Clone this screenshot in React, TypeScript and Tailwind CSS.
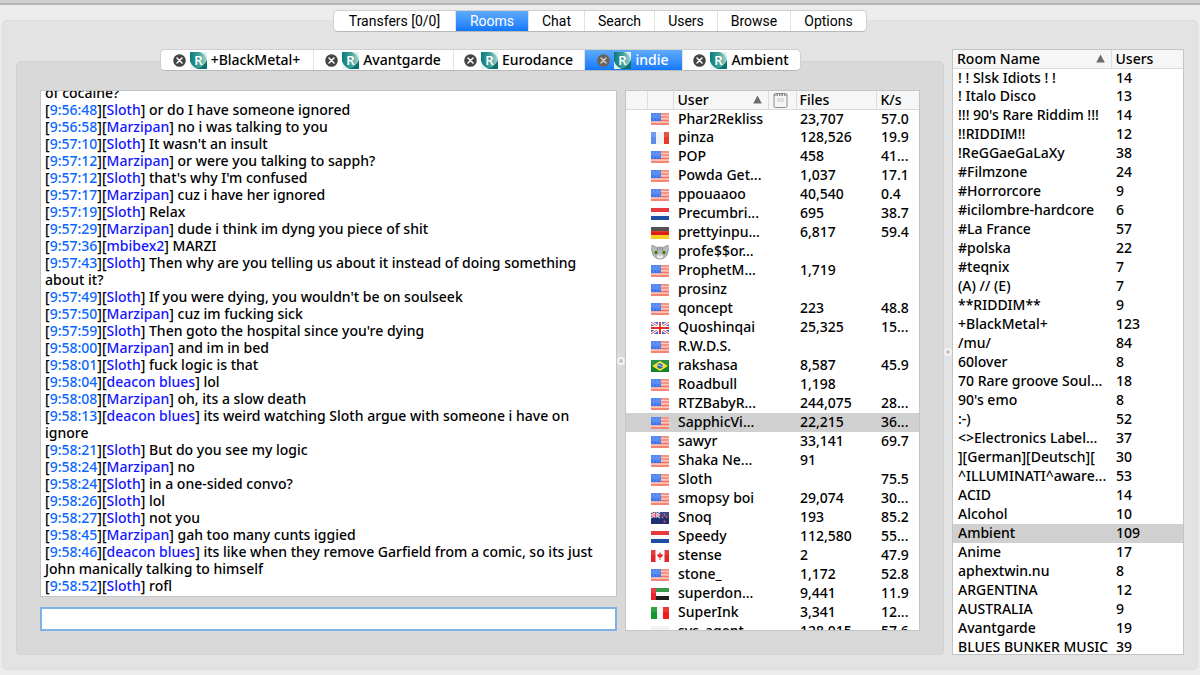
import { useState } from "react";
import clsx from "clsx";

interface IMessage {
  time: string;
  user: string;
  text: string;
}

interface IUser {
  flag: string;
  name: string;
  files: string;
  speed: string;
}

const mainTabs = [
  { label: "Transfers [0/0]", width: "w-[122px]" },
  { label: "Rooms", width: "w-[73px]" },
  { label: "Chat", width: "w-[56px]" },
  { label: "Search", width: "w-[70px]" },
  { label: "Users", width: "w-[63px]" },
  { label: "Browse", width: "w-[73px]" },
  { label: "Options", width: "w-[75px]" },
];

const roomTabs = [
  { label: "+BlackMetal+", width: "w-[153px]" },
  { label: "Avantgarde", width: "w-[140px]" },
  { label: "Eurodance", width: "w-[131px]" },
  { label: "indie", width: "w-[98px]" },
  { label: "Ambient", width: "w-[117px]" },
];

const messages: IMessage[] = [
  { time: "9:56:48", user: "Sloth", text: "or do I have someone ignored" },
  { time: "9:56:58", user: "Marzipan", text: "no i was talking to you" },
  { time: "9:57:10", user: "Sloth", text: "It wasn't an insult" },
  { time: "9:57:12", user: "Marzipan", text: "or were you talking to sapph?" },
  { time: "9:57:12", user: "Sloth", text: "that's why I'm confused" },
  { time: "9:57:17", user: "Marzipan", text: "cuz i have her ignored" },
  { time: "9:57:19", user: "Sloth", text: "Relax" },
  { time: "9:57:29", user: "Marzipan", text: "dude i think im dyng you piece of shit" },
  { time: "9:57:36", user: "mbibex2", text: "MARZI" },
  {
    time: "9:57:43",
    user: "Sloth",
    text: "Then why are you telling us about it instead of doing something about it?",
  },
  { time: "9:57:49", user: "Sloth", text: "If you were dying, you wouldn't be on soulseek" },
  { time: "9:57:50", user: "Marzipan", text: "cuz im fucking sick" },
  { time: "9:57:59", user: "Sloth", text: "Then goto the hospital since you're dying" },
  { time: "9:58:00", user: "Marzipan", text: "and im in bed" },
  { time: "9:58:01", user: "Sloth", text: "fuck logic is that" },
  { time: "9:58:04", user: "deacon blues", text: "lol" },
  { time: "9:58:08", user: "Marzipan", text: "oh, its a slow death" },
  {
    time: "9:58:13",
    user: "deacon blues",
    text: "its weird watching Sloth argue with someone i have on ignore",
  },
  { time: "9:58:21", user: "Sloth", text: "But do you see my logic" },
  { time: "9:58:24", user: "Marzipan", text: "no" },
  { time: "9:58:24", user: "Sloth", text: "in a one-sided convo?" },
  { time: "9:58:26", user: "Sloth", text: "lol" },
  { time: "9:58:27", user: "Sloth", text: "not you" },
  { time: "9:58:45", user: "Marzipan", text: "gah too many cunts iggied" },
  {
    time: "9:58:46",
    user: "deacon blues",
    text: "its like when they remove Garfield from a comic, so its just John manically talking to himself",
  },
  { time: "9:58:52", user: "Sloth", text: "rofl" },
];

const users: IUser[] = [
  { flag: "us", name: "Phar2Rekliss", files: "23,707", speed: "57.0" },
  { flag: "fr", name: "pinza", files: "128,526", speed: "19.9" },
  { flag: "us", name: "POP", files: "458", speed: "41..." },
  { flag: "us", name: "Powda Get...", files: "1,037", speed: "17.1" },
  { flag: "us", name: "ppouaaoo", files: "40,540", speed: "0.4" },
  { flag: "nl", name: "Precumbri...", files: "695", speed: "38.7" },
  { flag: "de", name: "prettyinpu...", files: "6,817", speed: "59.4" },
  { flag: "cat", name: "profe$$or...", files: "", speed: "" },
  { flag: "us", name: "ProphetM...", files: "1,719", speed: "" },
  { flag: "us", name: "prosinz", files: "", speed: "" },
  { flag: "us", name: "qoncept", files: "223", speed: "48.8" },
  { flag: "gb", name: "Quoshinqai", files: "25,325", speed: "15..." },
  { flag: "us", name: "R.W.D.S.", files: "", speed: "" },
  { flag: "br", name: "rakshasa", files: "8,587", speed: "45.9" },
  { flag: "us", name: "Roadbull", files: "1,198", speed: "" },
  { flag: "us", name: "RTZBabyR...", files: "244,075", speed: "28..." },
  { flag: "us", name: "SapphicVi...", files: "22,215", speed: "36..." },
  { flag: "us", name: "sawyr", files: "33,141", speed: "69.7" },
  { flag: "us", name: "Shaka Ne...", files: "91", speed: "" },
  { flag: "us", name: "Sloth", files: "", speed: "75.5" },
  { flag: "us", name: "smopsy boi", files: "29,074", speed: "30..." },
  { flag: "nz", name: "Snoq", files: "193", speed: "85.2" },
  { flag: "nl", name: "Speedy", files: "112,580", speed: "55..." },
  { flag: "ca", name: "stense", files: "2", speed: "47.9" },
  { flag: "us", name: "stone_", files: "1,172", speed: "52.8" },
  { flag: "ae", name: "superdon...", files: "9,441", speed: "11.9" },
  { flag: "it", name: "SuperInk", files: "3,341", speed: "12..." },
  { flag: "none", name: "sys_agent", files: "128,015", speed: "57.6" },
];

const rooms = [
  { name: "! ! Slsk Idiots ! !", users: 14 },
  { name: "! Italo Disco", users: 13 },
  { name: "!!! 90's Rare Riddim !!!", users: 14 },
  { name: "!!RIDDIM!!", users: 12 },
  { name: "!ReGGaeGaLaXy", users: 38 },
  { name: "#Filmzone", users: 24 },
  { name: "#Horrorcore", users: 9 },
  { name: "#icilombre-hardcore", users: 6 },
  { name: "#La France", users: 57 },
  { name: "#polska", users: 22 },
  { name: "#teqnix", users: 7 },
  { name: "(A) // (E)", users: 7 },
  { name: "**RIDDIM**", users: 9 },
  { name: "+BlackMetal+", users: 123 },
  { name: "/mu/", users: 84 },
  { name: "60lover", users: 8 },
  { name: "70 Rare groove Soul...", users: 18 },
  { name: "90's emo", users: 8 },
  { name: ":-)", users: 52 },
  { name: "<>Electronics Label...", users: 37 },
  { name: "][German][Deutsch][", users: 30 },
  { name: "^ILLUMINATI^aware...", users: 53 },
  { name: "ACID", users: 14 },
  { name: "Alcohol", users: 10 },
  { name: "Ambient", users: 109 },
  { name: "Anime", users: 17 },
  { name: "aphextwin.nu", users: 8 },
  { name: "ARGENTINA", users: 12 },
  { name: "AUSTRALIA", users: 9 },
  { name: "Avantgarde", users: 19 },
  { name: "BLUES BUNKER MUSIC", users: 39 },
];

function FlagShape({ code }: { code: string }) {
  switch (code) {
    case "us":
      return (
        <>
          <rect width="18" height="12" fill="#fbc3ba" />
          <path d="M0 1h18M0 4h18M0 7.500h18M0 11h18" stroke="#f4705f" strokeWidth="1.700" />
          <rect width="10" height="8" fill="#3d78ee" />
          <path d="M2 2h1M5 2h1M8 2h1M3.500 4h1M6.500 4h1M2 6h1M5 6h1M8 6h1" stroke="#7ba6f8" />
        </>
      );
    case "fr":
      return (
        <>
          <rect width="18" height="12" fill="#f1f1f1" />
          <rect width="5" height="12" fill="#5b8def" />
          <rect x="13" width="5" height="12" fill="#e8392e" />
        </>
      );
    case "it":
      return (
        <>
          <rect width="18" height="12" fill="#f4f4f4" />
          <rect width="6" height="12" fill="#16962c" />
          <rect x="12" width="6" height="12" fill="#ee1c1c" />
        </>
      );
    case "nl":
      return (
        <>
          <rect width="18" height="12" fill="#f7f7f7" />
          <rect width="18" height="4" fill="#e3201f" />
          <rect y="8" width="18" height="4" fill="#1c4fa3" />
        </>
      );
    case "de":
      return (
        <>
          <rect width="18" height="4" fill="#3d3a36" />
          <rect y="4" width="18" height="4" fill="#e01f14" />
          <rect y="8" width="18" height="4" fill="#f4cf25" />
        </>
      );
    case "gb":
      return (
        <>
          <rect width="18" height="12" fill="#3a62c8" />
          <path d="M0 0L18 12M18 0L0 12" stroke="#fff" strokeWidth="3" />
          <path d="M0 0L18 12M18 0L0 12" stroke="#ea4a4a" strokeWidth="1" />
          <path d="M9 0V12M0 6H18" stroke="#fff" strokeWidth="4" />
          <path d="M9 0V12M0 6H18" stroke="#e52a2a" strokeWidth="2" />
        </>
      );
    case "br":
      return (
        <>
          <rect width="18" height="12" fill="#12812b" />
          <path d="M9 1L17 6L9 11L1 6Z" fill="#f5e22e" />
          <circle cx="9" cy="6" r="2.700" fill="#2f64b8" />
          <path d="M6.700 5.500Q9 5 11.300 6.800" stroke="#dfeaff" strokeWidth="0.700" fill="none" />
        </>
      );
    case "nz":
      return (
        <>
          <rect width="18" height="12" fill="#1d3072" />
          <path d="M0 0L9 6M9 0L0 6" stroke="#c9cfe6" strokeWidth="1.300" />
          <path d="M4.500 0V6M0 3H9" stroke="#fff" strokeWidth="2" />
          <path d="M4.500 0V6M0 3H9" stroke="#e0364a" strokeWidth="1" />
          <g fill="#e8505c">
            <circle cx="13.500" cy="2.500" r="1" />
            <circle cx="11.500" cy="5.500" r="1" />
            <circle cx="15.500" cy="5" r="1" />
            <circle cx="13.500" cy="9.500" r="1.100" />
          </g>
        </>
      );
    case "ca":
      return (
        <>
          <rect width="18" height="12" fill="#fafafa" />
          <rect width="4.500" height="12" fill="#e2262b" />
          <rect x="13.500" width="4.500" height="12" fill="#e2262b" />
          <path d="M9 2L10 4L12 4.500L11 7L9.400 7.500V10H8.600V7.500L7 7L6 4.500L8 4Z" fill="#e2262b" />
        </>
      );
    case "ae":
      return (
        <>
          <rect width="18" height="12" fill="#f7f7f7" />
          <rect width="18" height="4" fill="#1c8a2e" />
          <rect y="8" width="18" height="4" fill="#1c1c1c" />
          <rect width="5" height="12" fill="#e8242a" />
        </>
      );
    default:
      return <rect width="18" height="12" fill="#f2f2f5" />;
  }
}

function Flag({ code }: { code: string }) {
  if (code === "cat") {
    return (
      <svg viewBox="0 0 18 16" className="h-4 w-[18px]">
        <path
          d="M1 1L6 3.500Q9 2.500 12 3.500L17 1Q18 6 16.500 10Q14 15 9 15Q4 15 1.500 10Q0 6 1 1Z"
          fill="#b4babe"
          stroke="#899095"
          strokeWidth="0.800"
        />
        <path d="M6.500 4V6.500M9 3.500V6.500M11.500 4V6.500" stroke="#70777c" strokeWidth="0.800" />
        <ellipse cx="5" cy="8.500" rx="2.200" ry="1.900" fill="#7fa63c" />
        <ellipse cx="13" cy="8.500" rx="2.200" ry="1.900" fill="#7fa63c" />
        <circle cx="5" cy="8.500" r="0.900" fill="#26331a" />
        <circle cx="13" cy="8.500" r="0.900" fill="#26331a" />
        <ellipse cx="9" cy="12.500" rx="3" ry="1.900" fill="#eef0f1" />
        <path d="M8 11H10L9 12.300Z" fill="#d98a90" />
      </svg>
    );
  }
  return (
    <svg viewBox="0 0 18 12" className="h-3 w-[18px]">
      <FlagShape code={code} />
      <rect width="18" height="5" fill="#fff" opacity="0.120" />
    </svg>
  );
}

function RoomLogo() {
  return (
    <svg viewBox="0 0 17 17" className="h-[17px] w-[17px]">
      <defs>
        <linearGradient id="roomLogo" x1="0" y1="0" x2="1" y2="0">
          <stop offset="0" stopColor="#0c7b78" />
          <stop offset="0.500" stopColor="#3a9d97" />
          <stop offset="1" stopColor="#a9d9d4" />
        </linearGradient>
      </defs>
      <rect width="17" height="17" fill="#e3f3f0" />
      <path d="M0 0H17V17H8Q2 15 0 9Z" fill="url(#roomLogo)" />
      <path d="M17 8V17H6Q14 15 17 8Z" fill="#0a716e" />
      <path d="M10 0H17V7Q15 2 10 0Z" fill="#e3f3f0" />
      <text
        x="8.500"
        y="13"
        textAnchor="middle"
        fontFamily="Noto Sans, sans-serif"
        fontSize="13"
        fontWeight="600"
        fill="#fff"
      >
        R
      </text>
    </svg>
  );
}

function CloseIcon({ active }: { active: boolean }) {
  return (
    <svg viewBox="0 0 13 13" className="h-[13px] w-[13px]">
      <circle cx="6.500" cy="6.500" r="6.300" fill={active ? "#6a625c" : "#454545"} />
      <path
        d="M4 4L9 9M9 4L4 9"
        stroke={active ? "#d5d0cc" : "#fff"}
        strokeWidth="1.500"
        strokeLinecap="round"
      />
    </svg>
  );
}

function SortArrow() {
  return (
    <svg viewBox="0 0 9 9" className="h-[9px] w-[9px]">
      <path d="M4.500 0.500L8.800 8.500H0.200Z" fill="#6d6d6d" />
    </svg>
  );
}

function NoteIcon() {
  return (
    <svg viewBox="0 0 15 16" className="h-4 w-[15px]">
      <rect x="1" y="1.500" width="13" height="14" rx="1.500" fill="#f4f4f4" stroke="#8b8b8b" />
      <path d="M1 3H14" stroke="#8b8b8b" strokeWidth="2" strokeDasharray="1.500 1" />
      <path d="M4 7H11M4 9H11" stroke="#c9c9c9" />
    </svg>
  );
}

function Splitter() {
  return (
    <div className="flex w-2 shrink-0 cursor-col-resize items-center justify-center">
      <span className="h-2 w-2 shrink-0 rounded-full border-2 border-[#f4f4f4] bg-[#c4c4c4]" />
    </div>
  );
}

export default function App() {
  const [mainTab, setMainTab] = useState("Rooms");
  const [roomTab, setRoomTab] = useState("indie");
  const [selectedUser, setSelectedUser] = useState("SapphicVi...");
  const [selectedRoom, setSelectedRoom] = useState("Ambient");

  return (
    <div className="flex h-screen flex-col overflow-hidden bg-[#ececec] font-['Noto_Sans',sans-serif] text-sm font-medium text-black">
      {/* bottom edge of the toolbar */}
      <div className="h-[5px] shrink-0 border-b-2 border-[#b4b4b4] bg-[#d0d0d0]" />

      <div className="flex min-h-0 flex-1 flex-col px-[2px] pt-[5px] pb-[5px]">
        <nav className="z-10 -mb-3 flex h-[22px] shrink-0 self-center overflow-hidden rounded-[5px] border border-[#cfcfcf] border-b-[#b8b8b8] bg-white font-[Roboto,sans-serif] font-normal">
          {mainTabs.map((tab) => (
            <button
              key={tab.label}
              onClick={() => setMainTab(tab.label)}
              className={clsx(
                "flex items-center justify-center border-r border-[#e2e2e2] last:border-r-0",
                tab.width,
                mainTab === tab.label && "bg-linear-to-b from-[#5fabfb] to-[#0f78fb] text-white"
              )}
            >
              {tab.label}
            </button>
          ))}
        </nav>

        <main className="flex min-h-0 flex-1 rounded-[5px] border border-[#dcdcdc] bg-[#e3e3e3] px-[13px] pt-7 pb-[14px]">
          <section className="flex min-w-0 flex-1 flex-col">
            <div className="z-10 -mb-[10px] flex h-[22px] shrink-0 self-center overflow-hidden rounded-[5px] border border-[#cfcfcf] border-b-[#b8b8b8] bg-white">
              {roomTabs.map((tab) => {
                const active = roomTab === tab.label;
                return (
                  <div
                    key={tab.label}
                    className={clsx(
                      "flex items-center justify-center gap-1 border-r border-[#e2e2e2] last:border-r-0",
                      tab.width,
                      active && "bg-linear-to-b from-[#5fabfb] to-[#0f78fb] text-white"
                    )}
                  >
                    <button aria-label={"Close " + tab.label}>
                      <CloseIcon active={active} />
                    </button>
                    <button
                      onClick={() => setRoomTab(tab.label)}
                      className="flex items-center gap-1"
                    >
                      <RoomLogo />
                      {tab.label}
                    </button>
                  </div>
                );
              })}
            </div>

            <div className="flex min-h-0 flex-1 rounded-[5px] border border-[#d2d2d2] bg-[#d9d9d9] px-[23px] pt-7 pb-[23px]">
              {/* chat */}
              <div className="flex min-w-0 flex-1 flex-col gap-[10px]">
                <div className="flex min-h-0 flex-1 flex-col justify-end overflow-hidden border border-[#c4c4c4] bg-white px-1 pb-[2px] leading-[17px]">
                  <p>of cocaine?</p>
                  {messages.map((message, index) => (
                    <p key={index}>
                      [<span className="text-[#0a68ff]">{message.time}</span>][
                      <span className="text-[#1414ff]">{message.user}</span>] {message.text}
                    </p>
                  ))}
                </div>
                <input
                  type="text"
                  aria-label="Message"
                  className="h-6 shrink-0 border-2 border-[#7fb0e8] bg-white px-1 outline-none"
                />
              </div>

              <Splitter />

              {/* users in the room */}
              <div className="w-[295px] shrink-0 overflow-hidden border border-[#c4c4c4] bg-white">
                <table className="w-full table-fixed text-left">
                  <thead>
                    <tr className="h-[18px] border-b border-[#dadada] bg-[#f6f6f6] leading-[17px]">
                      <th className="w-[21px] border-r border-[#dcdcdc]" />
                      <th className="w-[26px] border-r border-[#dcdcdc]" />
                      <th className="w-[95px] border-r border-[#dcdcdc] pr-[6px] pl-1 font-medium">
                        <span className="flex items-center justify-between">
                          User <SortArrow />
                        </span>
                      </th>
                      <th className="w-[28px] border-r border-[#dcdcdc] pl-1">
                        <span className="flex h-[17px] items-center">
                          <NoteIcon />
                        </span>
                      </th>
                      <th className="w-[80px] border-r border-[#dcdcdc] pl-[3px] font-medium">Files</th>
                      <th className="pl-1 font-medium">K/s</th>
                    </tr>
                  </thead>
                  <tbody>
                    {users.map((user) => (
                      <tr
                        key={user.name}
                        onClick={() => setSelectedUser(user.name)}
                        className={clsx(
                          "h-[19px] align-top whitespace-nowrap leading-[17px]",
                          selectedUser === user.name && "bg-[#d0d0d0]"
                        )}
                      >
                        <td />
                        <td className="align-middle">
                          <span className="flex justify-center">
                            <Flag code={user.flag} />
                          </span>
                        </td>
                        <td className="pl-[5px]">{user.name}</td>
                        <td />
                        <td className="pl-1">{user.files}</td>
                        <td className="pl-[5px]">{user.speed}</td>
                      </tr>
                    ))}
                  </tbody>
                </table>
              </div>
            </div>
          </section>

          <Splitter />

          {/* room list */}
          <aside className="w-[232px] shrink-0 overflow-hidden border border-[#c4c4c4] bg-white">
            <table className="w-full table-fixed text-left">
              <thead>
                <tr className="h-[18px] border-b border-[#dadada] bg-[#f6f6f6] leading-[17px]">
                  <th className="w-[158px] border-r border-[#dcdcdc] pr-[6px] pl-1 font-medium">
                    <span className="flex items-center justify-between">
                      Room Name <SortArrow />
                    </span>
                  </th>
                  <th className="pl-1 font-medium">Users</th>
                </tr>
              </thead>
              <tbody>
                {rooms.map((room) => (
                  <tr
                    key={room.name}
                    onClick={() => setSelectedRoom(room.name)}
                    className={clsx(
                      "h-[19px] align-top whitespace-nowrap leading-[17px]",
                      selectedRoom === room.name && "bg-[#d0d0d0]"
                    )}
                  >
                    <td className="pl-[5px]">{room.name}</td>
                    <td className="pl-[5px]">{room.users}</td>
                  </tr>
                ))}
              </tbody>
            </table>
          </aside>
        </main>
      </div>
    </div>
  );
}
